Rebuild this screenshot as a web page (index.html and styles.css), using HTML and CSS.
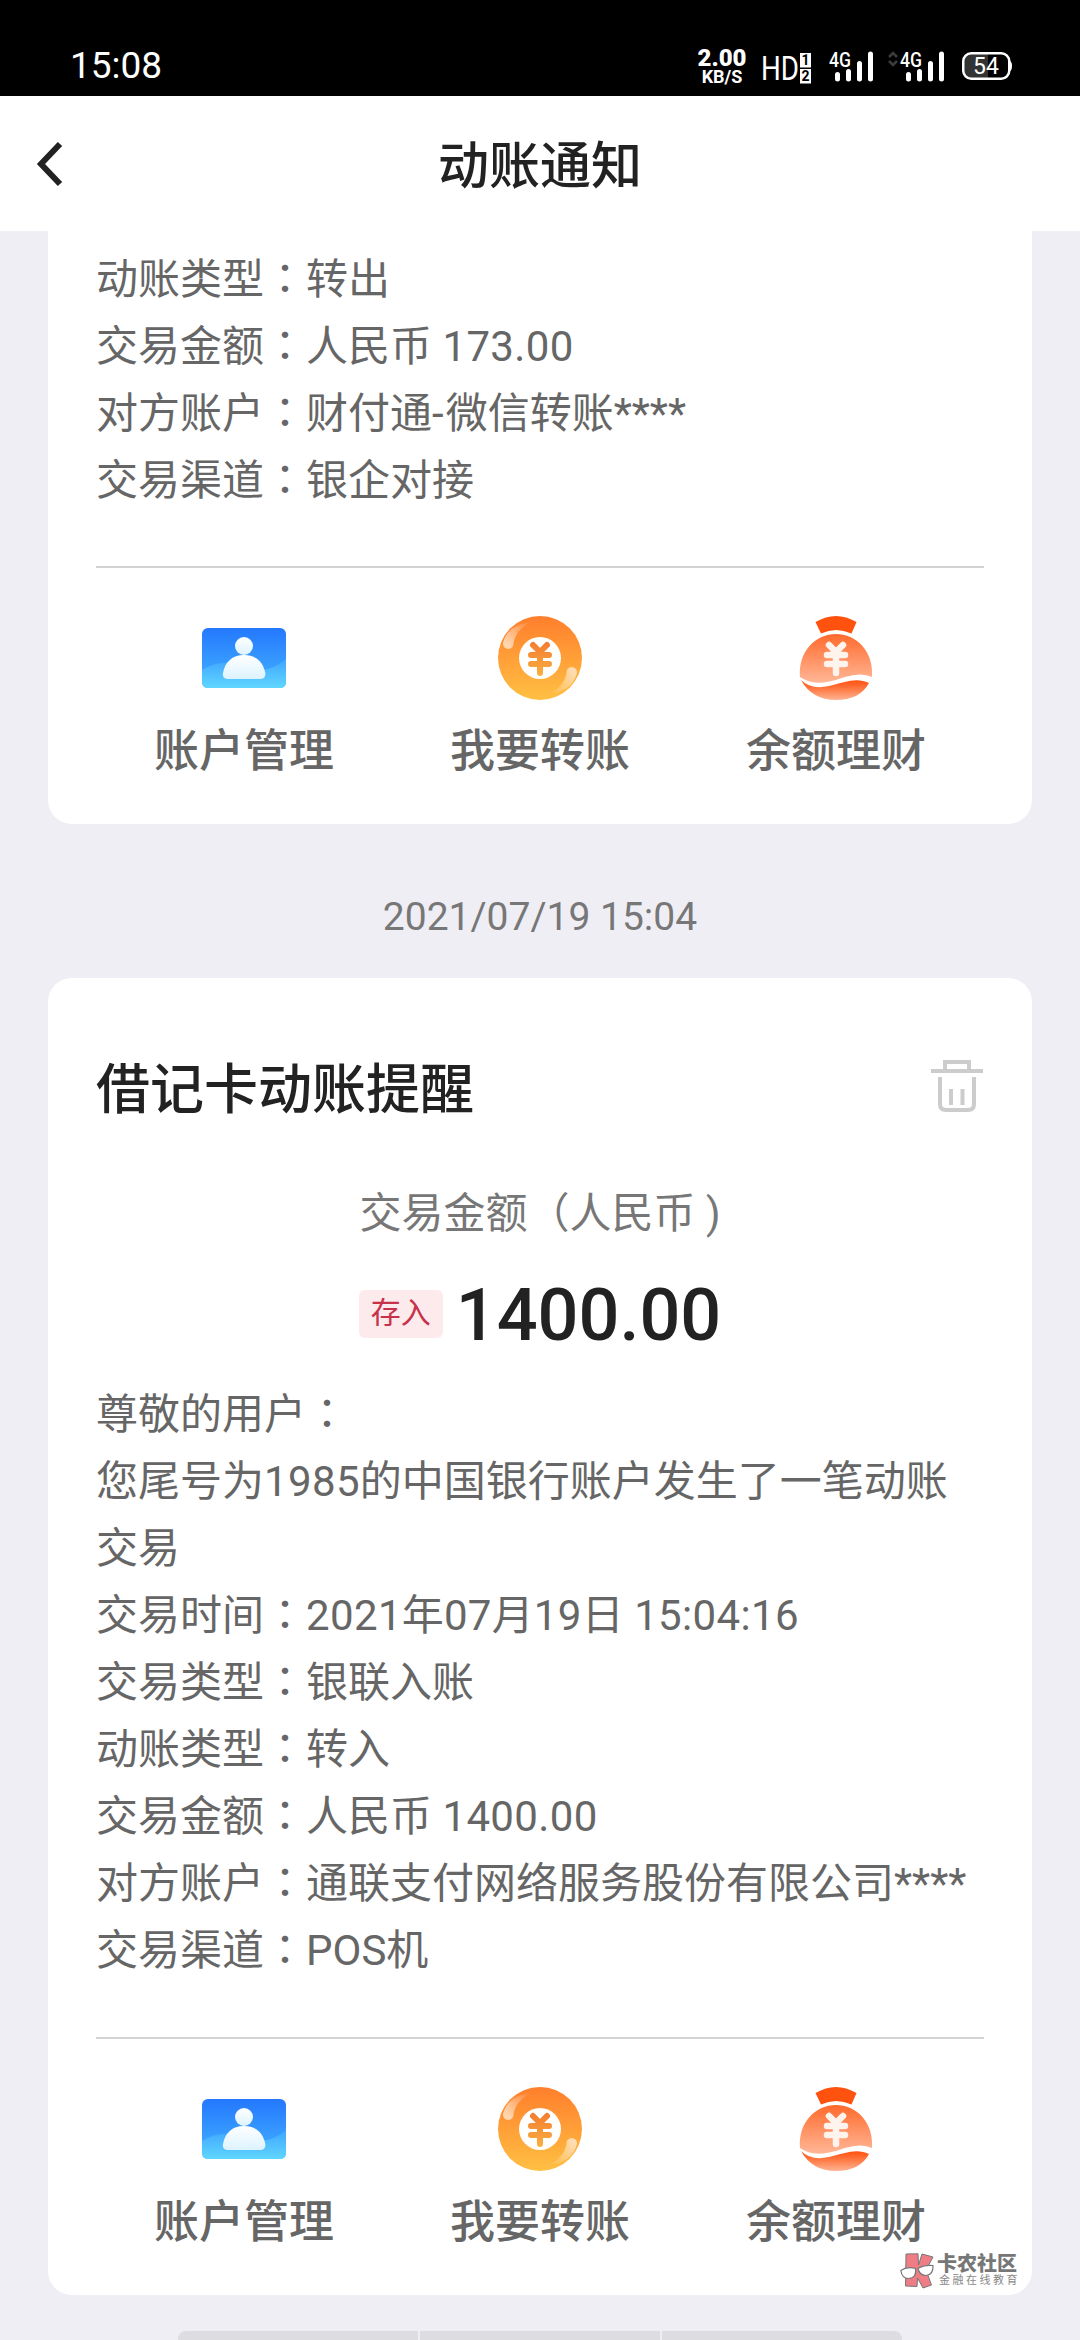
FILE: index.html
```html
<!DOCTYPE html>
<html lang="zh-CN">
<head>
<meta charset="utf-8">
<title>动账通知</title>
<link rel="stylesheet" href="styles.css">
</head>
<body>
<svg class="defs" width="0" height="0" aria-hidden="true">
  <defs>
    <linearGradient id="blue" x1="0" y1="0" x2="0" y2="1"><stop offset="0" stop-color="#2478fe"/><stop offset="1" stop-color="#45b4ff"/></linearGradient>
    <linearGradient id="wave" x1="0" y1="0" x2="0" y2="1"><stop offset="0" stop-color="#3fa5ff"/><stop offset="1" stop-color="#60d6ff"/></linearGradient>
    <linearGradient id="person" x1="0" y1="0" x2="0" y2="1"><stop offset="0" stop-color="#fff"/><stop offset="1" stop-color="#dcf3ff"/></linearGradient>
    <linearGradient id="coin" x1="0" y1="0" x2="0" y2="1"><stop offset="0" stop-color="#ff7e2c"/><stop offset="1" stop-color="#ffc043"/></linearGradient>
    <linearGradient id="yen" gradientUnits="userSpaceOnUse" x1="0" y1="26" x2="0" y2="60"><stop offset="0" stop-color="#f47c30"/><stop offset="1" stop-color="#f9b040"/></linearGradient>
    <linearGradient id="shineA" gradientUnits="userSpaceOnUse" x1="10" y1="28" x2="34" y2="7"><stop offset="0" stop-color="#fff" stop-opacity=".6"/><stop offset="1" stop-color="#fff" stop-opacity="0"/></linearGradient>
    <linearGradient id="shineB" gradientUnits="userSpaceOnUse" x1="74" y1="54" x2="50" y2="77"><stop offset="0" stop-color="#fff" stop-opacity=".6"/><stop offset="1" stop-color="#fff" stop-opacity="0"/></linearGradient>
    <linearGradient id="bag" x1="0" y1="0" x2="0" y2="1"><stop offset="0" stop-color="#ff6a2c"/><stop offset="1" stop-color="#ffb797"/></linearGradient>
    <linearGradient id="bagLow" x1="0" y1="0" x2="0" y2="1"><stop offset="0" stop-color="#ff5010"/><stop offset=".3" stop-color="#ff6a30"/><stop offset="1" stop-color="#ffb493"/></linearGradient>
    <symbol id="i-account" viewBox="0 0 84 84">
      <rect y="12" width="84" height="60" rx="6" fill="url(#blue)"/>
      <path d="M0 54Q14 45 30 47Q42 49 54 53Q69 56 84 43V66Q84 72 78 72H6Q0 72 0 66Z" fill="url(#wave)"/>
      <circle cx="42" cy="30" r="9" fill="url(#person)"/>
      <path d="M42 39C54 39 61 46 63.300 57Q64 63 58 63H26Q20 63 21 57C23 46 30 39 42 39Z" fill="url(#person)"/>
    </symbol>
    <symbol id="i-transfer" viewBox="0 0 84 84">
      <circle cx="42" cy="42" r="42" fill="url(#coin)"/>
      <circle cx="42" cy="42" r="21" fill="#fff"/>
      <path d="M35 29L42 36L49 29M42 37V57M33 39H51M33 48H51" fill="none" stroke="url(#yen)" stroke-width="6" stroke-linecap="round" stroke-linejoin="round"/>
      <path d="M5 27Q10 8 34 6Q18 13 15.500 27A5.300 5.300 0 1 1 5 27Z" fill="url(#shineA)"/>
      <path d="M79 57Q74 76 50 78Q66 71 68.500 57A5.300 5.300 0 1 1 79 57Z" fill="url(#shineB)"/>
    </symbol>
    <symbol id="i-wealth" viewBox="0 0 84 84">
      <path d="M21.500 6Q42-6 62.500 6L57.500 17.500Q42 10.500 27 17.500Z" fill="#fe520e"/>
      <path d="M6 61C4 35 22 18 42 18S80 35 78 61Q68 56 51 61Q26 70 14 65Q9 63 6 61Z" fill="url(#bag)"/>
      <path d="M7 64Q17 74 35 70C51 66 63 61 75 67Q66 84 42 84T7 64Z" fill="url(#bagLow)"/>
      <path d="M35 29L42 36L49 29M42 37V57M33 39H51M33 48H51" fill="none" stroke="#fff3ee" stroke-width="6.500" stroke-linecap="round" stroke-linejoin="round"/>
    </symbol>
  </defs>
</svg>
<div class="screen">
  <div class="status">
    <span class="clock">15:08</span>
    <div class="status-icons">
      <div class="speed"><b>2.00</b><span>KB/S</span></div>
      <svg class="hd" width="50" height="32" viewBox="0 0 50 32">
        <text class="hd-text" x="-1" y="26.500" textLength="38" lengthAdjust="spacingAndGlyphs">HD</text>
        <rect x="38" width="11" height="14.500" fill="#fff"/><rect x="38" y="16" width="11" height="14.500" fill="#fff"/>
        <text class="hd-num" x="43.500" y="11.500">1</text><text class="hd-num" x="43.500" y="27.500">2</text>
      </svg>
      <svg class="net" width="44" height="32" viewBox="0 0 44 32">
        <text class="net-text" x="0" y="15.500" textLength="22" lengthAdjust="spacingAndGlyphs">4G</text>
        <path d="M8.500 23.500V28M19.500 20.500V28M30.500 12.500V28M41.500 3V28" stroke="#fff" stroke-width="5" stroke-linecap="round"/>
      </svg>
      <svg class="arrows" width="10" height="16" viewBox="0 0 10 16"><path d="M1 6L5 2L9 6M1 10L5 14L9 10" fill="none" stroke="#3c3c3c" stroke-width="2.500"/></svg>
      <svg class="net2" width="44" height="32" viewBox="0 0 44 32">
        <text class="net-text" x="0" y="15.500" textLength="22" lengthAdjust="spacingAndGlyphs">4G</text>
        <path d="M8.500 23.500V28M19.500 20.500V28M30.500 12.500V28M41.500 3V28" stroke="#fff" stroke-width="5" stroke-linecap="round"/>
      </svg>
      <svg class="battery" width="50" height="28" viewBox="0 0 50 28">
        <path d="M8 1H26V27H8Q2 25 2 20V8Q2 3 8 1Z" fill="#333"/>
        <rect x="1.250" y="1.250" width="46" height="25.500" rx="8" fill="none" stroke="#fff" stroke-width="2.500"/>
        <path d="M47 8.500Q50 9 50 14T47 19.500Z" fill="#fff"/>
        <text class="batt-text" x="24" y="22">54</text>
      </svg>
    </div>
  </div>
  <header class="navbar">
    <svg class="back" width="26" height="46" viewBox="0 0 26 46"><path d="M23 3L4 23L23 43" fill="none" stroke="#222" stroke-width="6"/></svg>
    <h1>动账通知</h1>
  </header>
  <main class="feed">
    <section class="card first">
      <div class="details">
        <p>动账类型<i lang="zh-TW">：</i>转出</p>
        <p>交易金额<i lang="zh-TW">：</i>人民币 <span class="num">173.00</span></p>
        <p>对方账户<i lang="zh-TW">：</i>财付通<span class="dash">-</span>微信转账****</p>
        <p>交易渠道<i lang="zh-TW">：</i>银企对接</p>
      </div>
      <nav class="actions">
        <a><svg class="icon"><use href="#i-account"/></svg><span>账户管理</span></a>
        <a><svg class="icon"><use href="#i-transfer"/></svg><span>我要转账</span></a>
        <a><svg class="icon"><use href="#i-wealth"/></svg><span>余额理财</span></a>
      </nav>
    </section>
    <time class="stamp">2021/07/19 15:04</time>
    <section class="card second">
      <div class="card-head">
        <h2>借记卡动账提醒</h2>
        <svg class="trash" width="54" height="54" viewBox="0 0 54 54"><path d="M1 12H53M15 12V3H39V12M10 18V45Q10 51 16 51H38Q44 51 44 45V18M21 30V46M32.500 30V46" fill="none" stroke="#ccc" stroke-width="4"/></svg>
      </div>
      <div class="caption">交易金额（人民币 )</div>
      <div class="amount"><span class="tag">存入</span><strong>1400.00</strong></div>
      <div class="details">
        <p>尊敬的用户<i lang="zh-TW">：</i></p>
        <p>您尾号为<span class="num">1985</span>的中国银行账户发生了一笔动账交易</p>
        <p>交易时间<i lang="zh-TW">：</i><span class="num">2021</span>年<span class="num">07</span>月<span class="num">19</span>日 <span class="num">15:04:16</span></p>
        <p>交易类型<i lang="zh-TW">：</i>银联入账</p>
        <p>动账类型<i lang="zh-TW">：</i>转入</p>
        <p>交易金额<i lang="zh-TW">：</i>人民币 <span class="num">1400.00</span></p>
        <p>对方账户<i lang="zh-TW">：</i>通联支付网络服务股份有限公司****</p>
        <p>交易渠道<i lang="zh-TW">：</i>POS机</p>
      </div>
      <nav class="actions">
        <a><svg class="icon"><use href="#i-account"/></svg><span>账户管理</span></a>
        <a><svg class="icon"><use href="#i-transfer"/></svg><span>我要转账</span></a>
        <a><svg class="icon"><use href="#i-wealth"/></svg><span>余额理财</span></a>
      </nav>
    </section>
    <div class="menu"><span></span><span></span><span></span></div>
  </main>
  <div class="watermark">
    <svg width="34" height="36" viewBox="0 0 34 36">
      <path d="M6 1L18 .8L18.500 12L22 1L33 4L26 17L31.500 32L23 35L17.500 25L17 33.500L5.500 33Z" fill="#ee7d86" stroke="#777" stroke-width="1"/>
      <path d="M.8 17.500Q7 13 15.500 15.500Q17 25 8.500 25.500Q2 25.500 .8 17.500ZM18 15.500Q24 11.500 33 12.500Q33.500 22 26 22.500Q19.500 22.500 18 15.500Z" fill="#fff" stroke="#777" stroke-width="1.200"/>
    </svg>
    <div class="wm-text"><b>卡农社区</b><span>金融在线教育</span></div>
  </div>
</div>
</body>
</html>
```
FILE: styles.css
```css
* { box-sizing: border-box; margin: 0; padding: 0; }
body { width: 1080px; height: 2340px; overflow: hidden; font-family: Roboto, "Noto Sans CJK SC", sans-serif; background: #efeef5; }
svg { overflow: visible; }
.defs { position: absolute; }
.screen { position: relative; width: 1080px; height: 2340px; overflow: hidden; display: flex; flex-direction: column; }

.status { height: 96px; flex: none; background: #000; color: #fff; display: flex; justify-content: space-between; padding: 0 68px 0 70px; }
.clock { font-size: 37px; line-height: 44px; margin-top: 44px; }
.status-icons { display: flex; align-items: flex-start; padding-top: 48px; }
.speed { width: 50px; display: flex; flex-direction: column; align-items: center; font-weight: 700; margin-right: 15px; }
.speed b { font-size: 24px; line-height: 20px; }
.speed span { font-size: 18px; line-height: 18px; }
.hd { margin: 5px 17px 0 0; }
.hd-text { font-size: 33px; fill: #fff; font-weight: 400; }
.hd-num { font-size: 14px; font-weight: 700; text-anchor: middle; }
.net, .net2 { margin-top: 3px; }
.net { margin-right: 15px; }
.net-text { font-size: 20px; font-weight: 500; fill: #fff; }
.arrows { margin: 3px 2px 0 0; }
.net2 { margin-right: 18px; }
.battery { margin-top: 4px; }
.batt-text { font-size: 23px; fill: #fff; text-anchor: middle; }

.navbar { height: 135px; flex: none; background: #fff; display: grid; grid-template-columns: 100px 1fr 100px; align-items: center; }
.back { margin-left: 37px; }
h1 { font-size: 51px; line-height: 60px; padding-top: 7px; font-weight: 500; color: #222; text-align: center; }

.feed { flex: 1; display: flex; flex-direction: column; align-items: center; }
.card { width: 984px; flex: none; background: #fff; padding: 0 48px; }
.first { height: 593px; border-radius: 0 0 24px 24px; padding-top: 15px; }
.second { height: 1317px; border-radius: 24px; padding-top: 76px; }
.details { font-size: 42px; line-height: 67px; color: #666; }
.details i { font-style: normal; font-family: "Noto Sans CJK TC", sans-serif; line-height: 1; }
.details .num { letter-spacing: .35px; }
.details .dash { letter-spacing: 2px; }
.second .details { margin-top: 25px; }
.actions { margin-top: 52px; border-top: 2px solid #d3d3d3; padding-top: 48px; display: grid; grid-template-columns: repeat(3, 1fr); }
.second .actions { margin-top: 53px; }
.actions a { display: flex; flex-direction: column; align-items: center; gap: 25px; font-size: 45px; line-height: 54px; font-weight: 500; color: #666; }
.icon { width: 84px; height: 84px; }
.stamp { height: 154px; line-height: 187px; font-size: 39px; color: #777; }

.card-head { display: flex; justify-content: space-between; align-items: center; height: 72px; }
h2 { font-size: 54px; line-height: 72px; padding-top: 2px; font-weight: 500; color: #222; }
.trash { margin-top: -8px; }
.caption { margin-top: 56px; text-align: center; font-size: 42px; line-height: 64px; color: #777; }
.amount { margin-top: 26px; height: 84px; display: flex; justify-content: center; align-items: center; gap: 13px; }
.tag { width: 84px; height: 48px; border-radius: 6px; background: #fdeaec; color: #c7324a; font-size: 30px; line-height: 46px; text-align: center; }
.amount strong { font-size: 72px; line-height: 84px; padding-top: 3px; font-weight: 500; color: #222; }

.menu { width: 724px; height: 60px; margin-top: 36px; display: flex; gap: 2px; border-radius: 8px; overflow: hidden; flex: none; }
.menu span { flex: 1; background: #dddce1; }

.watermark { position: absolute; left: 900px; top: 2253px; display: flex; gap: 3px; }
.wm-text { display: flex; flex-direction: column; }
.wm-text b { font-size: 20px; line-height: 22px; color: #777; font-weight: 900; }
.wm-text span { font-size: 11px; line-height: 12px; letter-spacing: 2.500px; color: #888; margin: 0 0 0 2px; }
```
